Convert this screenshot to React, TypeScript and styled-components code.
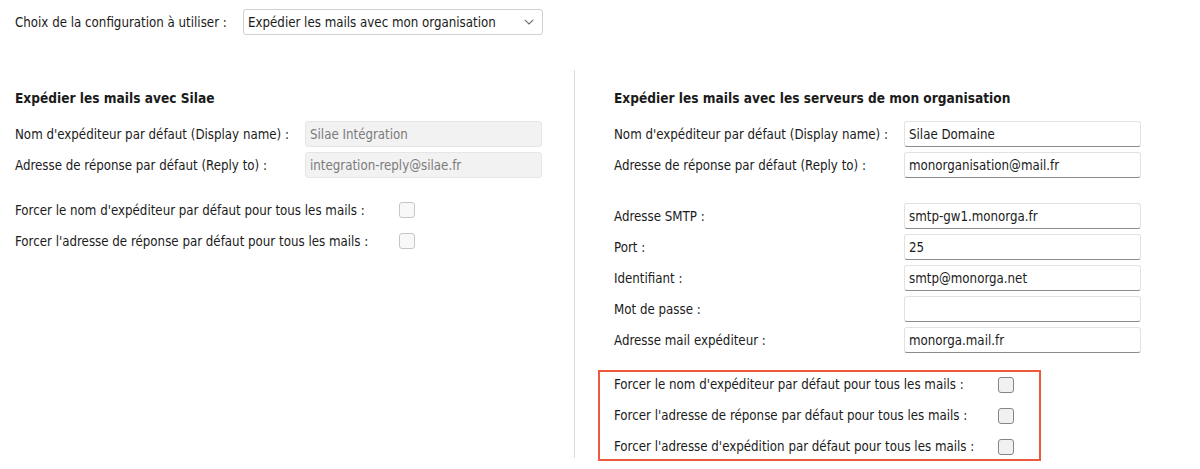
import React from "react";
import styled, { createGlobalStyle } from "styled-components";

const Global = createGlobalStyle`
  html, body { margin: 0; padding: 0; background: #ffffff; }
  body {
    font-family: "DejaVu Sans Condensed", "DejaVu Sans", "Liberation Sans", sans-serif;
    font-stretch: condensed;
    font-size: 13.2px;
    color: #1b1b1b;
  }
  * { box-sizing: border-box; }
`;

const Page = styled.div`
  width: 1200px;
  height: 469px;
  padding-top: 9px;
  overflow: hidden;
`;

const TopBar = styled.div`
  display: flex;
  align-items: center;
  padding-left: 15px;
  height: 26px;
`;

const TopLabel = styled.span`
  width: 228px;
  flex: none;
`;

const Select = styled.div`
  width: 300px;
  height: 26px;
  border: 1px solid #d0d0d0;
  border-radius: 3px;
  background: #ffffff;
  display: flex;
  align-items: center;
  justify-content: space-between;
  padding: 0 8px 0 4px;
`;

const Columns = styled.div`
  display: flex;
  align-items: flex-start;
  margin-top: 35px;
`;

const LeftCol = styled.div`
  width: 574px;
  flex: none;
  padding: 0 32px 0 15px;
`;

const Divider = styled.div`
  width: 1px;
  height: 388px;
  flex: none;
  background: #dcdcdc;
`;

const RightCol = styled.div`
  flex: 1;
  padding-left: 23px;
`;

const RightInner = styled.div`
  padding-left: 16px;
  width: 543px;
`;

const SectionTitle = styled.div`
  font-weight: bold;
  font-size: 13.6px;
  line-height: 16px;
  margin-top: 20px;
  margin-bottom: 15px;
`;

const FieldGroup = styled.div<{ $top?: number }>`
  display: flex;
  flex-direction: column;
  gap: 5px;
  margin-top: ${(p) => p.$top ?? 0}px;
`;

const FieldRow = styled.div`
  display: flex;
  align-items: center;
  height: 26px;
`;

const FieldLabel = styled.span`
  width: 290px;
  flex: none;
`;

const TextField = styled.input<{ $disabled?: boolean }>`
  width: 237px;
  height: 26px;
  margin: 0;
  padding: 0 4px;
  font: inherit;
  outline: none;
  border-radius: 3px;
  border: 1px solid ${(p) => (p.$disabled ? "#e6e6e6" : "#e2e2e2")};
  border-bottom-color: ${(p) => (p.$disabled ? "#e6e6e6" : "#8c8c8c")};
  background: ${(p) => (p.$disabled ? "#f2f2f2" : "#ffffff")};
  color: ${(p) => (p.$disabled ? "#7b7b7b" : "#1b1b1b")};
`;

const CheckRow = styled.div<{ $h: number }>`
  display: flex;
  align-items: center;
  height: ${(p) => p.$h}px;
`;

const CheckLabel = styled.span`
  width: 384px;
  flex: none;
`;

const CheckBox = styled.span<{ $disabled?: boolean }>`
  width: 16px;
  height: 16px;
  flex: none;
  border-radius: 3px;
  border: 1px solid ${(p) => (p.$disabled ? "#c6c6c6" : "#858585")};
  background: ${(p) => (p.$disabled ? "#f8f8f8" : "#f1f1f1")};
`;

const HighlightBox = styled.div`
  width: fit-content;
  margin-top: 17px;
  border: 2px solid #ec5a3e;
  padding: 0 25px 0 14px;
  display: flex;
  flex-direction: column;
  gap: 6px;
`;

const Chevron = () => (
  <svg width="10" height="6" viewBox="0 0 10 6" fill="none">
    <path d="M0.8 0.8 L5 5 L9.2 0.8" stroke="#6a6a6a" strokeWidth="1.1" />
  </svg>
);

type Field = { label: string; value: string };

const Fields = ({ items, disabled, top }: { items: Field[]; disabled?: boolean; top?: number }) => (
  <FieldGroup $top={top}>
    {items.map((f) => (
      <FieldRow key={f.label}>
        <FieldLabel>{f.label}</FieldLabel>
        <TextField $disabled={disabled} readOnly value={f.value} />
      </FieldRow>
    ))}
  </FieldGroup>
);

export default function App() {
  return (
    <Page>
      <Global />
      <TopBar>
        <TopLabel>Choix de la configuration à utiliser :</TopLabel>
        <Select>
          <span>Expédier les mails avec mon organisation</span>
          <Chevron />
        </Select>
      </TopBar>
      <Columns>
        <LeftCol>
          <SectionTitle>Expédier les mails avec Silae</SectionTitle>
          <Fields
            disabled
            items={[
              { label: "Nom d'expéditeur par défaut (Display name) :", value: "Silae Intégration" },
              { label: "Adresse de réponse par défaut (Reply to) :", value: "integration-reply@silae.fr" },
            ]}
          />
          <FieldGroup $top={19}>
            <CheckRow $h={26}>
              <CheckLabel>Forcer le nom d'expéditeur par défaut pour tous les mails :</CheckLabel>
              <CheckBox $disabled />
            </CheckRow>
            <CheckRow $h={26}>
              <CheckLabel>Forcer l'adresse de réponse par défaut pour tous les mails :</CheckLabel>
              <CheckBox $disabled />
            </CheckRow>
          </FieldGroup>
        </LeftCol>
        <Divider />
        <RightCol>
          <RightInner>
            <SectionTitle>Expédier les mails avec les serveurs de mon organisation</SectionTitle>
            <Fields
              items={[
                { label: "Nom d'expéditeur par défaut (Display name) :", value: "Silae Domaine" },
                { label: "Adresse de réponse par défaut (Reply to) :", value: "monorganisation@mail.fr" },
              ]}
            />
            <Fields
              top={25}
              items={[
                { label: "Adresse SMTP :", value: "smtp-gw1.monorga.fr" },
                { label: "Port :", value: "25" },
                { label: "Identifiant :", value: "smtp@monorga.net" },
                { label: "Mot de passe :", value: "" },
                { label: "Adresse mail expéditeur :", value: "monorga.mail.fr" },
              ]}
            />
          </RightInner>
          <HighlightBox>
            <CheckRow $h={25}>
              <CheckLabel>Forcer le nom d'expéditeur par défaut pour tous les mails :</CheckLabel>
              <CheckBox />
            </CheckRow>
            <CheckRow $h={25}>
              <CheckLabel>Forcer l'adresse de réponse par défaut pour tous les mails :</CheckLabel>
              <CheckBox />
            </CheckRow>
            <CheckRow $h={25}>
              <CheckLabel>Forcer l'adresse d'expédition par défaut pour tous les mails :</CheckLabel>
              <CheckBox />
            </CheckRow>
          </HighlightBox>
        </RightCol>
      </Columns>
    </Page>
  );
}
